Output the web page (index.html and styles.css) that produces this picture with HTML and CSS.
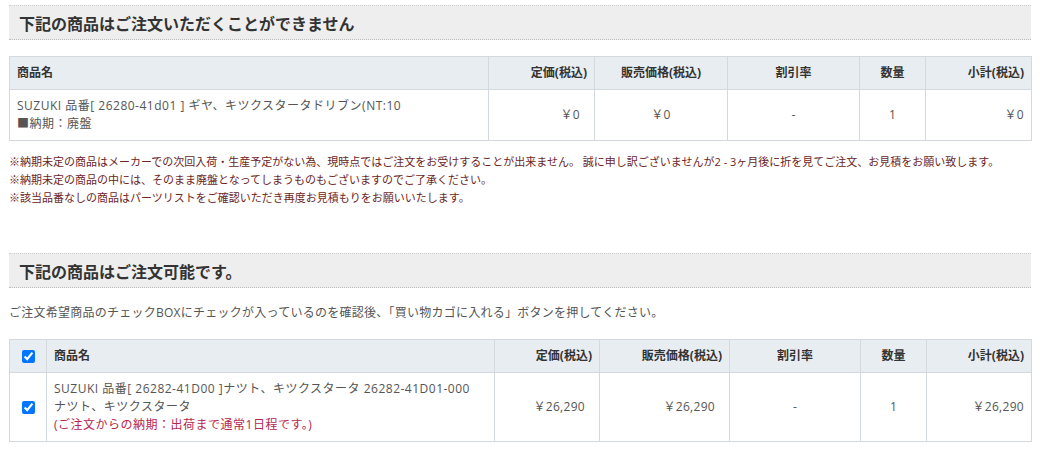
FILE: index.html
```html
<!DOCTYPE html>
<html lang="ja">
<head>
<meta charset="utf-8">
<link rel="stylesheet" href="styles.css">
</head>
<body>
<div class="page">
  <h2 class="sec-title">下記の商品はご注文いただくことができません</h2>
  <table class="cart ng">
    <colgroup>
      <col class="c-name1"><col class="c-list1"><col class="c-sale1"><col class="c-rate1"><col class="c-qty1"><col class="c-sub1">
    </colgroup>
    <thead>
      <tr>
        <th class="l">商品名</th>
        <th class="r">定価(税込)</th>
        <th class="c">販売価格(税込)</th>
        <th class="c">割引率</th>
        <th class="c">数量</th>
        <th class="r">小計(税込)</th>
      </tr>
    </thead>
    <tbody>
      <tr>
        <td class="l name">SUZUKI 品番[ 26280-41d01 ] ギヤ、キツクスタータドリブン(NT:10<br>■納期：廃盤</td>
        <td class="r list">￥0</td>
        <td class="c">￥0</td>
        <td class="c">-</td>
        <td class="c">1</td>
        <td class="r">￥0</td>
      </tr>
    </tbody>
  </table>
  <div class="notes">
    <p>※納期未定の商品はメーカーでの次回入荷・生産予定がない為、現時点ではご注文をお受けすることが出来ません。 誠に申し訳ございませんが2 - 3ヶ月後に折を見てご注文、お見積をお願い致します。</p>
    <p>※納期未定の商品の中には、そのまま廃盤となってしまうものもございますのでご了承ください。</p>
    <p>※該当品番なしの商品はパーツリストをご確認いただき再度お見積もりをお願いいたします。</p>
  </div>

  <h2 class="sec-title second">下記の商品はご注文可能です。</h2>
  <p class="lead">ご注文希望商品のチェックBOXにチェックが入っているのを確認後、「買い物カゴに入れる」ボタンを押してください。</p>
  <table class="cart ok">
    <colgroup>
      <col class="c-chk"><col class="c-name2"><col class="c-list2"><col class="c-sale2"><col class="c-rate2"><col class="c-qty2"><col class="c-sub2">
    </colgroup>
    <thead>
      <tr>
        <th class="c chk"><input type="checkbox" checked></th>
        <th class="l">商品名</th>
        <th class="r">定価(税込)</th>
        <th class="r">販売価格(税込)</th>
        <th class="c">割引率</th>
        <th class="c">数量</th>
        <th class="r">小計(税込)</th>
      </tr>
    </thead>
    <tbody>
      <tr>
        <td class="c chk"><input type="checkbox" checked></td>
        <td class="l name">SUZUKI 品番[ 26282-41D00 ]ナツト、キツクスタータ 26282-41D01-000<br>ナツト、キツクスタータ<br><span class="lead-time">(ご注文からの納期：出荷まで通常1日程です。)</span></td>
        <td class="r list">￥26,290</td>
        <td class="r list">￥26,290</td>
        <td class="c">-</td>
        <td class="c">1</td>
        <td class="r">￥26,290</td>
      </tr>
    </tbody>
  </table>
</div>
</body>
</html>
```

FILE: styles.css
```css
html, body {
  margin: 0;
  padding: 0;
  background: #fff;
}
body {
  font-family: "Open Sans", "Noto Sans CJK JP", sans-serif;
  color: #555;
  font-size: 12px;
}
.page {
  width: 1022px;
  padding: 5px 0 0 9px;
}
.sec-title {
  margin: 0;
  height: 35px;
  box-sizing: border-box;
  padding: 0 10px;
  display: flex;
  align-items: center;
  background: #eeeeee;
  border-top: 1px dotted #cfcfcf;
  border-bottom: 1px dotted #bdbdbd;
  font-family: "Noto Sans CJK JP", sans-serif;
  font-size: 16px;
  font-weight: bold;
  color: #333;
}
.sec-title.second {
  margin-top: 46px;
}
.cart {
  width: 1022px;
  table-layout: fixed;
  border-collapse: collapse;
  margin-top: 16px;
}
.cart th, .cart td {
  border: 1px solid #d4d9e0;
  padding: 0 7px;
  line-height: 18px;
}
.cart th {
  background: #e8edf2;
  height: 32px;
  font-weight: bold;
  color: #333;
  font-size: 12px;
}
.cart td {
  color: #555;
  font-size: 12px;
  letter-spacing: 0.3px;
}
.cart td.name { letter-spacing: 0.5px; padding-left: 7px; }
.ng td { height: 50px; }
.ok td { height: 68px; }
.cart .l { text-align: left; }
.cart .r { text-align: right; }
.cart .c { text-align: center; }
.cart td.list { padding-right: 14px; }
.cart .chk { padding: 0; }
.cart .chk input {
  margin: 0;
  width: 13px;
  height: 13px;
  vertical-align: middle;
}
.lead-time { color: #b7264d; }

.c-name1 { width: 479px; }
.c-list1 { width: 106px; }
.c-sale1 { width: 133px; }
.c-rate1 { width: 132px; }
.c-qty1 { width: 66px; }
.c-sub1 { width: 106px; }

.c-chk { width: 37px; }
.c-name2 { width: 448px; }
.c-list2 { width: 105px; }
.c-sale2 { width: 130px; }
.c-rate2 { width: 131px; }
.c-qty2 { width: 66px; }
.c-sub2 { width: 105px; }

.notes {
  margin-top: 12px;
}
.notes p {
  margin: 0;
  font-size: 11px;
  line-height: 18px;
  color: #6b2525;
}
.lead {
  margin: 16px 0 0;
  font-size: 12px;
  line-height: 18px;
  color: #555;
  letter-spacing: 0.25px;
}
.ok { margin-top: 17px; }
```
